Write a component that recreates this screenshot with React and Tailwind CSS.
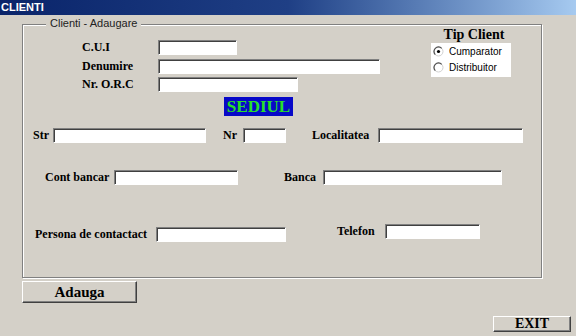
const serif = { fontFamily: '"Liberation Serif", "Times New Roman", serif' }
const sans = { fontFamily: '"Liberation Sans", Arial, sans-serif' }

const TextBox = ({ w }) => (
  <div
    className={`h-[15px] shrink-0 border border-t-[#808080] border-l-[#808080] border-b-white border-r-white bg-white shadow-[inset_1px_1px_0_#404040] ${w}`}
  />
)

const Label = ({ children, w }) => (
  <span className={`shrink-0 whitespace-nowrap text-[12px] font-bold leading-[15px] text-black ${w}`} style={serif}>
    {children}
  </span>
)

const Radio = ({ checked }) => (
  <svg width="11" height="11" viewBox="0 0 22 22" className="shrink-0">
    <circle cx="11" cy="11" r="9" fill="#fff" stroke="#d0d0d0" strokeWidth="2" />
    <path d="M4.6 17.4 A9 9 0 0 1 17.4 4.6" fill="none" stroke="#505050" strokeWidth="2.4" />
    {checked && <circle cx="11" cy="11" r="3.2" fill="#000" />}
  </svg>
)

const Button = ({ children, className }) => (
  <button
    className={`flex items-center justify-center border border-t-white border-l-white border-b-[#404040] border-r-[#404040] bg-[#d4d0c8] shadow-[inset_-1px_-1px_0_#808080] font-bold text-black ${className}`}
    style={serif}
  >
    {children}
  </button>
)

export default function App() {
  return (
    <div className="flex h-[336px] w-[576px] flex-col overflow-hidden bg-[#d4d0c8]">
      {/* TITLE BAR */}
      <div className="flex h-[15px] shrink-0 items-center bg-linear-to-r from-[#0a246a] via-[#1f3f85] to-[#a6caf0] pl-[1px]">
        <span className="text-[11px] font-bold leading-none text-white" style={sans}>
          CLIENTI
        </span>
      </div>

      {/* GROUP BOX */}
      <div className="relative ml-[22px] mt-[9px] h-[254px] w-[520px] shrink-0 border border-[#808080] shadow-[inset_1px_1px_0_#fff,1px_1px_0_#fff]">
        <span
          className="absolute left-[23px] top-[-8px] bg-[#d4d0c8] px-[4px] text-[11px] leading-[13px] text-[#222]"
          style={sans}
        >
          Clienti - Adaugare
        </span>

        {/* TOP SECTION */}
        <div className="flex items-start">
          <div className="ml-[59px] mt-[15px] flex flex-col">
            <div className="flex items-center">
              <Label w="w-[76px]">C.U.I</Label>
              <TextBox w="w-[79px]" />
            </div>
            <div className="mt-[4px] flex items-center">
              <Label w="w-[76px]">Denumire</Label>
              <TextBox w="w-[222px]" />
            </div>
            <div className="mt-[3px] flex items-center">
              <Label w="w-[76px]">Nr. O.R.C</Label>
              <TextBox w="w-[140px]" />
            </div>
          </div>

          <div className="ml-auto mr-[30px] mt-[3px] flex w-[80px] flex-col items-center">
            <span className="pl-[6px] text-[14px] font-bold leading-[14px] text-black" style={serif}>
              Tip Client
            </span>
            <div className="mt-[1px] flex w-[80px] flex-col bg-white pb-[2px] pl-[2px]">
              <div className="flex h-[16px] items-center gap-[5px]">
                <Radio checked />
                <span className="text-[10px] text-black" style={sans}>Cumparator</span>
              </div>
              <div className="flex h-[16px] items-center gap-[5px]">
                <Radio />
                <span className="text-[10px] text-black" style={sans}>Distribuitor</span>
              </div>
            </div>
          </div>
        </div>

        {/* SEDIUL */}
        <div className="ml-[201px] mt-[5px] flex h-[19px] w-[69px] items-center justify-center bg-[#0808c8]">
          <span className="text-[17px] font-bold leading-none text-[#28e028]" style={serif}>
            SEDIUL
          </span>
        </div>

        {/* ADRESA */}
        <div className="ml-[10px] mt-[12px] flex items-center">
          <Label w="w-[20px]">Str</Label>
          <TextBox w="w-[153px]" />
          <div className="w-[17px]" />
          <Label w="w-[20px]">Nr</Label>
          <TextBox w="w-[43px]" />
          <div className="w-[26px]" />
          <Label w="w-[66px]">Localitatea</Label>
          <TextBox w="w-[145px]" />
        </div>

        {/* CONT */}
        <div className="ml-[22px] mt-[27px] flex items-center">
          <Label w="w-[69px]">Cont bancar</Label>
          <TextBox w="w-[124px]" />
          <div className="w-[46px]" />
          <Label w="w-[39px]">Banca</Label>
          <TextBox w="w-[179px]" />
        </div>

        {/* CONTACT */}
        <div className="ml-[12px] mt-[39px] flex items-start">
          <div className="mt-[3px] flex items-center">
            <Label w="w-[121px]">Persona de contactact</Label>
            <TextBox w="w-[130px]" />
          </div>
          <div className="w-[51px]" />
          <div className="flex items-center">
            <Label w="w-[48px]">Telefon</Label>
            <TextBox w="w-[95px]" />
          </div>
        </div>
      </div>

      {/* BUTOANE */}
      <Button className="ml-[22px] mt-[3px] h-[22px] w-[115px] text-[15px] leading-none">Adauga</Button>
      <Button className="ml-[493px] mt-[13px] h-[16px] w-[78px] text-[14px] leading-none">EXIT</Button>
    </div>
  )
}
